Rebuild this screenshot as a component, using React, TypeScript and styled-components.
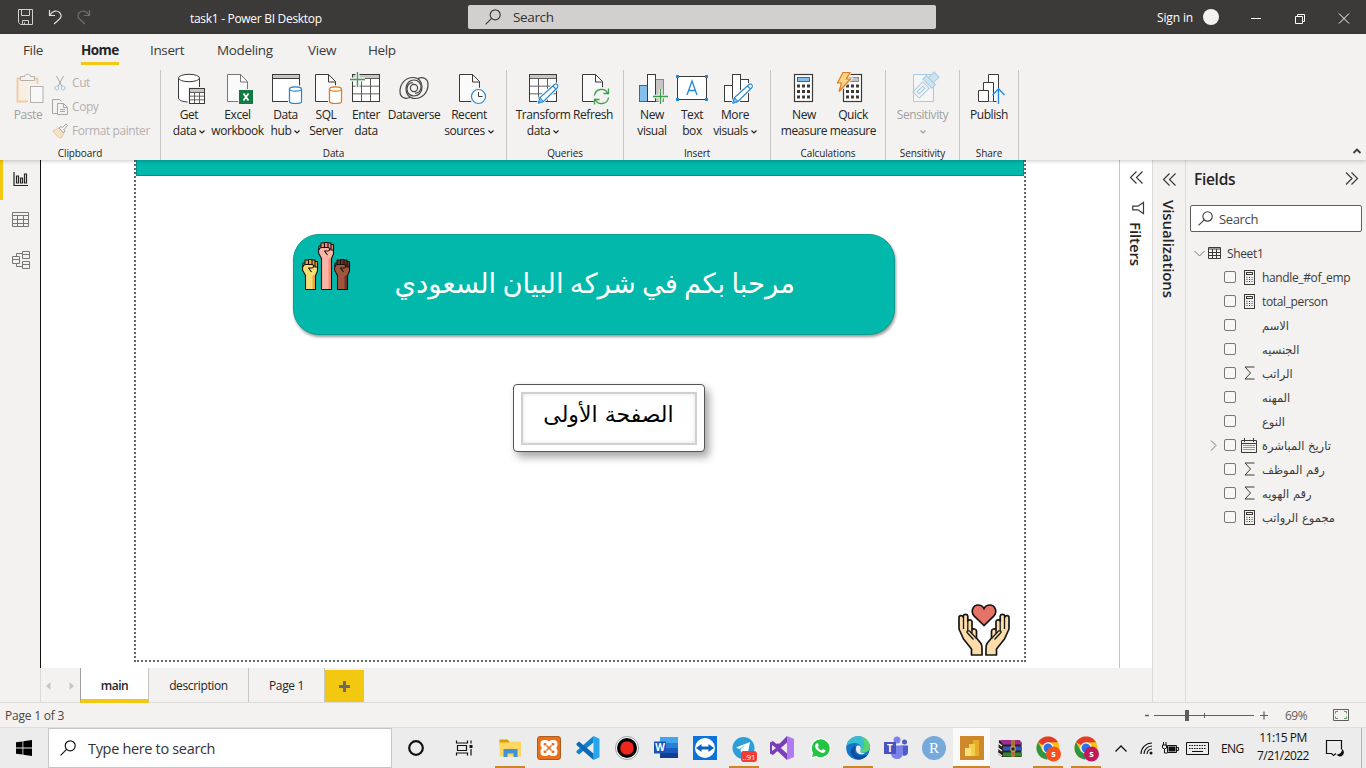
import React from "react";
import styled, { createGlobalStyle, css } from "styled-components";

const GlobalStyle = createGlobalStyle`
  * { box-sizing: border-box; }
  body {
    margin: 0;
    overflow: hidden;
    font-family: "Open Sans", "Noto Sans", "DejaVu Sans", sans-serif;
    font-size: 12px;
    letter-spacing: -0.03em;
    color: #252423;
  }
  svg { display: block; flex: none; }
`;

/* ---------- Shell ---------- */

const Window = styled.div`
  width: 1366px;
  height: 768px;
  display: flex;
  flex-direction: column;
  background: #f3f2f1;
`;

/* ---------- Title bar ---------- */

const TitleBar = styled.header`
  height: 34px;
  flex: none;
  display: flex;
  align-items: center;
  background: #3b3a39;
  color: #fff;
  padding: 0 17px;
`;
const QuickActions = styled.div`
  width: 173px;
  display: flex;
  gap: 13px;
`;
const DocTitle = styled.div`
  width: 278px;
  padding-top: 3px;
  letter-spacing: -0.3px;
`;
const TitleSearch = styled.div`
  width: 468px;
  height: 24px;
  display: flex;
  align-items: center;
  gap: 12px;
  padding-left: 17px;
  border-radius: 2px;
  background: #d2d0ce;
  color: #323130;
  font-size: 13.5px;
`;
const SignIn = styled.div`
  margin-left: auto;
  display: flex;
  align-items: center;
  gap: 10px;
  letter-spacing: -0.15px;
`;
const Avatar = styled.span`
  width: 16px;
  height: 16px;
  border-radius: 50%;
  background: #f3f2f1;
`;
const WindowButtons = styled.div`
  display: flex;
  gap: 34px;
  margin: 2px 0 0 32px;
`;

/* ---------- Ribbon ---------- */

const Ribbon = styled.section`
  height: 126px;
  flex: none;
  position: relative;
  z-index: 1;
  background: #f3f2f1;
  box-shadow: 0 1px 4px rgba(0, 0, 0, 0.22);
`;
const RibbonTabs = styled.nav`
  height: 34px;
  display: flex;
  padding: 0 0 0 23px;
  font-size: 13.5px;
  color: #3b3a39;
`;
const RibbonTab = styled.div<{ $slot: number; $active?: boolean }>`
  width: ${(p) => p.$slot}px;
  span {
    display: inline-block;
    height: 31px;
    line-height: 33px;
    ${(p) =>
      p.$active &&
      css`
        font-weight: 700;
        letter-spacing: -0.6px;
        color: #252423;
        border-bottom: 3px solid #f2c811;
      `}
  }
`;
const RibbonGroups = styled.div`
  height: 92px;
  display: flex;
`;
const Group = styled.div<{ $w: number }>`
  width: ${(p) => p.$w}px;
  height: 90px;
  margin-top: 2px;
  border-right: 1px solid #c8c6c4;
  display: flex;
  flex-direction: column;
`;
const GroupItems = styled.div<{ $pad?: number }>`
  height: 76px;
  display: flex;
  padding-left: ${(p) => p.$pad ?? 0}px;
`;
const GroupName = styled.div`
  font-size: 10px;
  line-height: 14px;
  margin-top: 1px;
  text-align: center;
  letter-spacing: -0.12px;
`;
const BigButton = styled.div<{ $w: number; $dim?: boolean }>`
  width: ${(p) => p.$w}px;
  display: flex;
  flex-direction: column;
  align-items: center;
  padding-top: 2px;
  line-height: 16px;
  white-space: nowrap;
  letter-spacing: -0.42px;
  color: ${(p) => (p.$dim ? "#a19f9d" : "#252423")};
  svg + div { margin-top: 3px; }
`;
const Line = styled.div`
  display: flex;
  align-items: center;
  justify-content: center;
  gap: 3px;
  min-height: 16px;
`;
const ClipboardList = styled.div`
  padding: 2px 0 0 8px;
  color: #b3b0ad;
`;
const ClipboardRow = styled.div`
  height: 24px;
  display: flex;
  align-items: center;
  gap: 4px;
  padding-bottom: 3px;
  letter-spacing: -0.42px;
`;
const Collapse = styled.div`
  margin: 80px 4px 0 auto;
`;

/* ---------- Body ---------- */

const Body = styled.main`
  height: 543px;
  flex: none;
  display: flex;
  border-bottom: 1px solid #dcdad8;
`;
const Rail = styled.aside`
  width: 40px;
  flex: none;
`;
const RailItem = styled.div<{ $active?: boolean }>`
  height: 40px;
  display: flex;
  align-items: center;
  justify-content: center;
  border-left: 3px solid ${(p) => (p.$active ? "#f2c811" : "transparent")};
  padding: 0 3px 1px 0;
`;
const Center = styled.div`
  width: 1112px;
  flex: none;
  display: flex;
  flex-direction: column;
`;
const Stage = styled.div`
  height: 508px;
  display: flex;
  background: #fff;
`;
const Canvas = styled.div`
  width: 1080px;
  border-left: 1px solid #111;
  border-right: 1px solid #c8c6c4;
  padding-left: 93px;
`;
const ReportPage = styled.div`
  width: 892px;
  height: 502px;
  border: 2px dotted #666;
  border-top: 0;
  display: flex;
  flex-direction: column;
  align-items: center;
`;
const TopBand = styled.div`
  width: 888px;
  height: 16px;
  background: #01b8aa;
  border: 1px solid #078f85;
  border-top: 0;
`;
const Banner = styled.div`
  width: 602px;
  height: 101px;
  margin: 58px 0 0 28px;
  border-radius: 26px;
  border: 1px solid #0d9c91;
  background: #01b8aa;
  box-shadow: 1px 2px 3px rgba(0, 0, 0, 0.4);
  display: flex;
  color: #fff;
`;
const Fists = styled.div`
  display: flex;
  align-items: flex-end;
  height: 48px;
  margin: 7px 0 0 8px;
`;
const BannerText = styled.div`
  font-family: "DejaVu Sans", sans-serif;
  font-size: 27.5px;
  line-height: 40px;
  letter-spacing: 0;
  word-spacing: -2.6px;
  width: 400px;
  margin: 28px 0 0 45px;
  text-align: center;
  white-space: nowrap;
`;
const NavCard = styled.div`
  width: 192px;
  height: 68px;
  margin: 49px 0 0 57px;
  padding: 7px;
  border: 1px solid #555;
  border-radius: 4px;
  background: #fff;
  box-shadow: 4px 5px 8px rgba(0, 0, 0, 0.36);
`;
const NavCardInner = styled.div`
  height: 53px;
  border: 2px solid #d0d0d0;
  box-shadow: inset 0 0 4px rgba(0, 0, 0, 0.12);
  font-family: "DejaVu Sans", sans-serif;
  font-size: 22px;
  line-height: 42px;
  letter-spacing: 0;
  text-align: center;
  white-space: nowrap;
  color: #000;
`;
const CornerArt = styled.div`
  align-self: flex-end;
  margin: auto 14px 3px 0;
`;

/* ---------- Side panes ---------- */

const SidePane = styled.div<{ $plain?: boolean }>`
  width: ${(p) => (p.$plain ? 32 : 33)}px;
  flex: none;
  display: flex;
  flex-direction: column;
  align-items: center;
  padding-top: ${(p) => (p.$plain ? 11 : 13)}px;
  background: ${(p) => (p.$plain ? "#fff" : "#f3f2f1")};
  border-left: ${(p) => (p.$plain ? "0" : "1px solid #dcdad8")};
`;
const Vertical = styled.div<{ $top: number }>`
  writing-mode: vertical-rl;
  margin-top: ${(p) => p.$top}px;
  font-size: 15px;
  line-height: 18px;
  font-weight: 600;
  letter-spacing: -0.1px;
`;
const FilterMark = styled.div`
  margin: 18px 0 8px 3px;
`;
const Fields = styled.aside`
  flex: 1;
  border-left: 1px solid #dcdad8;
  display: flex;
  flex-direction: column;
`;
const FieldsHead = styled.div`
  height: 39px;
  display: flex;
  align-items: center;
  justify-content: space-between;
  padding: 0 8px 2px 8px;
  font-size: 15.5px;
  font-weight: 600;
  letter-spacing: -0.3px;
`;
const FieldsSearch = styled.div`
  height: 27px;
  flex: none;
  margin: 6px 4px 9px 4px;
  border: 1px solid #605e5c;
  border-radius: 2px;
  background: #fff;
  display: flex;
  align-items: center;
  gap: 6px;
  padding-left: 7px;
  font-size: 13px;
  color: #484644;
`;
const FieldRow = styled.div`
  height: 24px;
  display: flex;
  align-items: center;
  color: #3b3a39;
  white-space: nowrap;
`;
const Twisty = styled.span<{ $w: number; $pad: number }>`
  width: ${(p) => p.$w}px;
  padding-left: ${(p) => p.$pad}px;
`;
const Check = styled.span`
  width: 12px;
  height: 12px;
  border: 1px solid #7a7876;
  border-radius: 2px;
  background: #f8f7f6;
`;
const FieldIcon = styled.span`
  width: 26px;
  display: flex;
  justify-content: center;
`;
const TableName = styled.span`
  margin-left: 6px;
`;
const FieldName = styled.span<{ $arabic?: boolean }>`
  ${(p) =>
    p.$arabic &&
    css`
      font-family: "DejaVu Sans", sans-serif;
      font-size: 11.5px;
      letter-spacing: 0;
      padding-top: 2px;
    `}
`;

/* ---------- Page tabs and status ---------- */

const PageTabs = styled.div`
  height: 34px;
  display: flex;
  border-left: 1px solid #dcdad8;
`;
const Pager = styled.div`
  width: 39px;
  display: flex;
  align-items: center;
  justify-content: space-between;
  padding: 2px 6px 0 5px;
`;
const PageTab = styled.div<{ $w: number; $active?: boolean }>`
  width: ${(p) => p.$w}px;
  line-height: 35px;
  text-align: center;
  border-right: 1px solid #c8c6c4;
  ${(p) =>
    p.$active &&
    css`
      background: #fff;
      font-weight: 600;
      letter-spacing: -0.5px;
      border-left: 1px solid #a19f9d;
      border-bottom: 4px solid #f2c811;
      height: 35px;
    `}
`;
const AddPage = styled.div`
  width: 39px;
  height: 32px;
  margin-top: 2px;
  background: #f2c811;
  display: flex;
  align-items: center;
  justify-content: center;
`;
const StatusBar = styled.footer`
  height: 24px;
  flex: none;
  display: flex;
  align-items: center;
  padding: 0 17px 0 5px;
  color: #484644;
  letter-spacing: -0.2px;
`;
const ZoomControls = styled.div`
  margin-left: auto;
  display: flex;
  align-items: center;
`;
const ZoomValue = styled.span`
  width: 23px;
  margin: 0 25px 0 17px;
  letter-spacing: -0.5px;
  color: #605e5c;
`;

/* ---------- Taskbar ---------- */

const Taskbar = styled.div`
  height: 41px;
  display: flex;
  background: #ececec;
  border-top: 1px solid #dfdfdf;
`;
const StartButton = styled.div`
  width: 48px;
  display: flex;
  align-items: center;
  justify-content: center;
`;
const TaskSearch = styled.div`
  width: 344px;
  height: 40px;
  border: 1px solid #c6c6c6;
  background: #fff;
  display: flex;
  align-items: center;
  gap: 12px;
  padding-left: 11px;
  font-size: 14.5px;
  letter-spacing: -0.33px;
  color: #333;
`;
const TaskSlot = styled.div<{ $w: number; $active?: boolean; $bar?: boolean }>`
  width: ${(p) => p.$w}px;
  display: flex;
  flex-direction: column;
  align-items: center;
  justify-content: space-between;
  padding-top: 8px;
  background: ${(p) => (p.$active ? "#fafafa" : "transparent")};
  &::after {
    content: "";
    width: ${(p) => (p.$active ? p.$w : 30)}px;
    height: 2px;
    background: ${(p) => (p.$bar ? "#cc8529" : "transparent")};
  }
`;
const Tray = styled.div`
  padding-left: 10px;
  display: flex;
  align-items: center;
  color: #111;
  flex: 1;
`;
const KeyboardMark = styled.span`
  margin-left: 7px;
`;
const Lang = styled.span`
  width: 23px;
  margin: 0 12px;
  letter-spacing: -0.6px;
`;
const Clock = styled.div`
  width: 54px;
  display: flex;
  flex-direction: column;
  align-items: center;
  line-height: 18px;
  letter-spacing: -0.55px;
  white-space: nowrap;
  margin: 0 16px 2px 0;
`;
const ShowDesktop = styled.span`
  height: 40px;
  width: 5px;
  margin-left: auto;
  border-left: 1px solid #b5b5b5;
`;

/* ---------- Shared glyphs ---------- */

const INK = "#3b3a39";
const BLUE = "#2488d8";
const GREEN = "#3a9e4b";

type GlyphProps = { w: number; h: number; c?: string; s?: number; children: React.ReactNode };
const Glyph = ({ w, h, c = INK, s = 1, children }: GlyphProps) => (
  <svg width={w} height={h} viewBox={`0 0 ${w} ${h}`} fill="none" stroke={c} strokeWidth={s} overflow="visible">
    {children}
  </svg>
);

const Caret = ({ c = "#252423" }: { c?: string }) => (
  <Glyph w={6} h={5} c={c} s={1.2}><path d="M.5 1.500 3 4 5.500 1.500" /></Glyph>
);
const Magnifier = ({ size, c = INK }: { size: number; c?: string }) => (
  <svg width={size} height={size} viewBox="0 0 16 16" fill="none" stroke={c} strokeWidth="1.15">
    <circle cx="10.2" cy="5.8" r="5" /><path d="M6.6 9.4.6 15.4" />
  </svg>
);
const DoubleChevron = ({ right }: { right?: boolean }) => (
  <Glyph w={13} h={13} s={1.2}>
    <path d={right ? "M1 .5 7 6.5 1 12.5M6.500 .5 12.500 6.500 6.500 12.5" : "M6.500 .5 .5 6.500 6.500 12.5M12.500 .5 6.500 6.500 12.500 12.5"} />
  </Glyph>
);
const Page = ({ x = 5.5, c = INK }: { x?: number; c?: string }) => (
  <>
    <path d={`M${x} 2.500h13l7 7V29.500H${x}Z`} fill="#fafafa" stroke={c} />
    <path d={`M${x + 13} 2.500v7.500h7`} stroke={c} />
  </>
);
const Cylinder = ({ c }: { c: string }) => (
  <g stroke={c} fill="#fff" strokeWidth="1.200">
    <path d="M19.500 17v12.500c0 1.200 2.700 2 6 2s6-.8 6-2V17" />
    <ellipse cx="25.500" cy="17" rx="6" ry="2.200" />
  </g>
);
const Pencil = ({ dx = 0 }: { dx?: number }) => (
  <g transform={`translate(${dx} 0)`}>
    <path d="M11.500 31 13 25.500 27.500 12.500c2-1.500 4.500 1 3 3L16.500 29.500Z" fill="#fff" stroke="#fff" strokeWidth="3" />
    <path d="M11.500 31 13 25.500 27.500 12.500c2-1.500 4.500 1 3 3L16.500 29.500ZM26 14l3.300 3.300" fill="#fff" stroke={BLUE} strokeWidth="1.200" />
    <path d="M11.500 31 13 25.500l3.500 4Z" fill="#83beec" stroke={BLUE} />
  </g>
);
const Plus = ({ x, y }: { x: number; y: number }) => (
  <path d={`M${x - 7.5} ${y}h15M${x} ${y - 7.5}v15`} stroke={GREEN} strokeWidth="1.3" />
);
const Grid = ({ x, y, w, h }: { x: number; y: number; w: number; h: number }) => (
  <>
    <rect x={x} y={y} width={w} height={h} fill="#fff" />
    <rect x={x + 0.5} y={y + 0.5} width={w - 1} height={3} fill="#c8c6c4" stroke="none" />
    <path
      stroke="#605e5c"
      d={`M${x} ${y + 4}h${w}M${x} ${y + 4 + (h - 4) / 3}h${w}M${x} ${y + 4 + ((h - 4) * 2) / 3}h${w}M${x + w / 3} ${y + 4}v${h - 4}M${x + (w * 2) / 3} ${y + 4}v${h - 4}`}
    />
    <rect x={x} y={y} width={w} height={h} />
  </>
);
const Calculator = ({ x, grey }: { x: number; grey?: boolean }) => (
  <>
    <rect x={x} y="2.500" width="18" height="27" fill="#fff" strokeWidth="1.2" />
    <rect x={x + 3} y="5.500" width="12" height="4" fill={grey ? "#c8c6c4" : "#83beec"} stroke={grey ? "#8a8886" : "#1c6fb8"} />
    {[13, 18.5, 24].map((y) =>
      [2.5, 7.5, 12.5].map((d) => <rect key={`${y}-${d}`} x={x + d} y={y - 0.5} width="3" height="3" fill={INK} stroke="none" />)
    )}
  </>
);

const SWIRL = "M12 25.500C7 27.500 2 25.500 2 19.500 2 11 8 5.500 15 5.500c6 0 9 4.500 9 9.500 0 6-4 9-8 9s-7-3-7-7 2.500-6.300 6-6.300";

const ribbonArt: Record<string, React.ReactNode> = {
  getData: (
    <>
      <path d="M5.500 6v20c0 2.200 4.500 4 10.500 4s10.500-1.800 10.500-4V6" fill="#fff" />
      <ellipse cx="16" cy="6" rx="10.500" ry="3.700" fill="#fff" />
      <rect x="14.500" y="15" width="18" height="18" fill="#f3f2f1" stroke="none" />
      <Grid x={16.5} y={16.5} w={15} h={15} />
    </>
  ),
  excel: (
    <>
      <Page c="#797775" />
      <rect x="16" y="17" width="15" height="15" fill="#f3f2f1" stroke="none" />
      <rect x="17" y="18" width="14" height="14" fill="#107c41" stroke="none" />
      <path d="m21.500 21.500 5 7M26.500 21.500l-5 7" stroke="#fff" strokeWidth="1.800" />
    </>
  ),
  dataHub: (
    <>
      <rect x="2.500" y="2.500" width="27" height="27" fill="#fff" />
      <rect x="3" y="3" width="26" height="3" fill="#c8c6c4" stroke="none" />
      <path d="M2.500 6.500h27" />
      <path d="M18 33V15.500c0-3 15-3 15 0V33Z" fill="#f3f2f1" stroke="none" />
      <Cylinder c={BLUE} />
    </>
  ),
  sql: (
    <>
      <Page />
      <path d="M18 33V15.500c0-3 15-3 15 0V33Z" fill="#f3f2f1" stroke="none" />
      <Cylinder c="#e07b1a" />
    </>
  ),
  enter: (
    <>
      <Grid x={2.5} y={2.5} w={27} h={27} />
      <path d="M0 7.500h15M7.500 0v15" stroke="#f3f2f1" strokeWidth="4" />
      <Plus x={7.5} y={7.5} />
    </>
  ),
  dataverse: (
    <g strokeWidth="1.200" stroke="#484644">
      <path d={SWIRL} />
      <path d={SWIRL} transform="rotate(180 16 16)" />
      <circle cx="16" cy="16" r="3.600" />
    </g>
  ),
  recent: (
    <>
      <Page x={6.5} />
      <circle cx="25.500" cy="24.500" r="9" fill="#f3f2f1" stroke="none" />
      <circle cx="25.500" cy="24.500" r="7" fill="#fff" stroke={BLUE} strokeWidth="1.200" />
      <path d="M25.500 20v4.500h4" />
    </>
  ),
  transform: (<><Grid x={2.5} y={2.5} w={27} h={27} /><Pencil /></>),
  refresh: (
    <>
      <Page />
      <circle cx="24.500" cy="24.500" r="9.500" fill="#f3f2f1" stroke="none" />
      <path d="M17.500 23.500a7 7 0 0 1 13.300-2M31.500 25.500a7 7 0 0 1-13.300 2M31.500 16.500v5h-5M17.500 32.500v-5h5" stroke={GREEN} strokeWidth="1.300" />
    </>
  ),
  newVisual: (
    <>
      <rect x="3.500" y="13.500" width="8" height="16" fill="#83beec" stroke="#1c6fb8" />
      <rect x="19.500" y="7.500" width="8" height="22" fill="#c8c6c4" stroke="#8a8886" />
      <rect x="11.500" y="2.500" width="8" height="27" fill="#fff" />
      <path d="M17 24.500h16M24.500 17v16" stroke="#f3f2f1" strokeWidth="3.500" />
      <Plus x={24.5} y={24.5} />
    </>
  ),
  textBox: (
    <>
      <rect x="1.500" y="4.500" width="29" height="23" fill="#fff" />
      {[[0, 3], [29, 3], [0, 26], [29, 26]].map(([x, y]) => (
        <rect key={`${x}${y}`} x={x} y={y} width="3" height="3" fill={BLUE} stroke="none" />
      ))}
      <path d="m11 23 5-14 5 14M12.500 18.500h7" stroke={BLUE} strokeWidth="1.300" />
    </>
  ),
  more: (
    <>
      <rect x="5.500" y="13.500" width="8" height="16" fill="#fff" />
      <rect x="21.500" y="7.500" width="8" height="22" fill="#fff" />
      <rect x="13.500" y="2.500" width="8" height="27" fill="#fff" />
      <Pencil dx={2.5} />
    </>
  ),
  newMeasure: <Calculator x={6.5} />,
  quickMeasure: (
    <>
      <Calculator x={6.5} grey />
      <path d="M6 .5h7l-3.500 6.500h4L2 19.500 4.500 11H.5Z" fill="#fcd58a" stroke="#f3f2f1" strokeWidth="3" />
      <path d="M6 .5h7l-3.500 6.500h4L2 19.500 4.500 11H.5Z" fill="#fcd58a" stroke="#e07b1a" strokeWidth="1.200" />
    </>
  ),
  sensitivity: (
    <g stroke="#a3cbe3">
      <path d="M6.500 2.500h20v27h-20Z" fill="#f6f6f6" />
      <g transform="rotate(45 20 12)" fill="#f3f2f1">
        <path d="M15.500 13.500h9v14h-9Z" /><path d="M18.500 16.500h3v8h-3Z" />
        <path d="M13.500 6.500h13v5h-13Z" fill="#cfe3ef" /><path d="M16.500-1.500h7v8h-7Z" fill="#cfe3ef" />
      </g>
    </g>
  ),
  publish: (
    <>
      <g fill="#fff" strokeLinejoin="round">
        <path d="M15.500 29.500v-27h10v27Z" /><path d="M10.500 29.500v-19h10v19" /><path d="M5.500 18.500h10v11h-10Z" />
      </g>
      <path d="M20 22.500 25.500 16l6 6V32h-8v-9Z" fill="#f3f2f1" stroke="none" />
      <path d="M25.500 32V17M19.500 23l6-6.200 6 6.200" stroke={BLUE} strokeWidth="1.300" />
    </>
  ),
};

type RibbonButton = { art: string; w: number; lines: string[]; caret?: boolean; dim?: boolean };
type RibbonGroup = { name: string; w: number; pad?: number; items: RibbonButton[] };

const groups: RibbonGroup[] = [
  {
    name: "Data", w: 346, pad: 6,
    items: [
      { art: "getData", w: 44, lines: ["Get", "data"], caret: true },
      { art: "excel", w: 53, lines: ["Excel", "workbook"] },
      { art: "dataHub", w: 43, lines: ["Data", "hub"], caret: true },
      { art: "sql", w: 38, lines: ["SQL", "Server"] },
      { art: "enter", w: 42, lines: ["Enter", "data"] },
      { art: "dataverse", w: 54, lines: ["Dataverse"] },
      { art: "recent", w: 56, lines: ["Recent", "sources"], caret: true },
    ],
  },
  {
    name: "Queries", w: 117, pad: 7,
    items: [
      { art: "transform", w: 58, lines: ["Transform", "data"], caret: true },
      { art: "refresh", w: 42, lines: ["Refresh"] },
    ],
  },
  {
    name: "Insert", w: 147, pad: 6,
    items: [
      { art: "newVisual", w: 44, lines: ["New", "visual"] },
      { art: "textBox", w: 36, lines: ["Text", "box"] },
      { art: "more", w: 50, lines: ["More", "visuals"], caret: true },
    ],
  },
  {
    name: "Calculations", w: 115, pad: 8,
    items: [
      { art: "newMeasure", w: 50, lines: ["New", "measure"] },
      { art: "quickMeasure", w: 48, lines: ["Quick", "measure"] },
    ],
  },
  { name: "Sensitivity", w: 74, items: [{ art: "sensitivity", w: 73, lines: ["Sensitivity", ""], caret: true, dim: true }] },
  { name: "Share", w: 59, items: [{ art: "publish", w: 58, lines: ["Publish"] }] },
];

const RibbonGroupView = ({ g }: { g: RibbonGroup }) => (
  <Group $w={g.w}>
    <GroupItems $pad={g.pad}>
      {g.items.map((b) => (
        <BigButton key={b.art} $w={b.w} $dim={b.dim}>
          <Glyph w={32} h={32}>{ribbonArt[b.art]}</Glyph>
          {b.lines.map((t, i) => (
            <Line key={i}>{t}{b.caret && i === b.lines.length - 1 && <Caret c={b.dim ? "#a19f9d" : undefined} />}</Line>
          ))}
        </BigButton>
      ))}
    </GroupItems>
    <GroupName>{g.name}</GroupName>
  </Group>
);

/* ---------- Report art ---------- */

const Fist = ({ h, skin, shade }: { h: number; skin: string; shade: string }) => (
  <svg width="16" height={h} viewBox={`0 0 16 ${h}`} stroke="#1a1210" strokeWidth="1.100" strokeLinejoin="round" overflow="visible">
    <path d={`M3.500 16.500V${h - 0.5}h10V16.500l2-4.500V6L10 4H1L.5 11Z`} fill={skin} />
    <path d={`M10.500 17v${h - 18}h2.500V16Z`} fill={shade} stroke="none" />
    <path d="M3 1h3.500v6H3ZM6.500.5H10v6.500H6.500ZM10 1h3v6h-3ZM13 2.500h2.500V8H13Z" fill={shade} />
    <path d="M1 8c0-2 1-2.500 3-2.500h6c2 0 2 3.500 0 3.500H6.500l3 4" fill={skin} />
  </svg>
);

const Palm = () => (
  <g strokeLinejoin="round">
    <path d="M13.500 51V45L5.500 35 1 25V13.500c0-2.500 4-2.500 4.300 0V12c.3-2.200 4.200-2.200 4.500 0v5c.5-1.800 4-1.500 4.200.5v8.500c.7-1.800 4.500-1.300 4.500 1v7l4.500 5.500c1 1.500 1 3 1 5V51Z" fill="#fbdcaa" stroke="#171717" strokeWidth="1.700" />
    <path d="M5.500 13.500V25M9.800 17v10.500M14 26v4M15.500 35.500 9.500 29c-1.500-1 0-3 2-2l7 7.500" fill="none" stroke="#171717" strokeWidth="1.300" />
  </g>
);
const HandsHeart = () => (
  <svg width="52" height="53" viewBox="0 0 52 53" overflow="visible">
    <path d="M26 21.500 16 11.800C12 7 15.500 1 20 1c3 0 5 1.500 6 3.500C27 2.500 29 1 32 1c4.500 0 8 6 4 10.800Z" fill="#e57368" stroke="#171717" strokeWidth="1.700" />
    <Palm />
    <g transform="translate(52 0) scale(-1 1)"><Palm /></g>
  </svg>
);

/* ---------- Field list ---------- */

const fieldArt: Record<string, React.ReactNode> = {
  calc: (
    <Glyph w={11} h={15}>
      <rect x=".5" y=".5" width="10" height="14" /><rect x="2.500" y="2.500" width="6" height="2" />
      <path d="M2.500 7.500h6M2.500 9.500h6M2.500 11.500h6" strokeDasharray="1 1.500" />
    </Glyph>
  ),
  sum: <Glyph w={11} h={14}><path d="M10.500 1H1l5.500 6L1 13h9.500" /></Glyph>,
  date: (
    <Glyph w={16} h={15}>
      <path d="M.5 2.500h15v12H.5ZM.5 5.500h15M3.500 0v4M12.500 0v4" />
      <path d="M2.500 7.500h11M2.500 9.500h11M2.500 11.500h11" strokeDasharray="1 1" />
    </Glyph>
  ),
};

const fields: { name: string; icon?: string; expand?: boolean }[] = [
  { name: "handle_#of_emp", icon: "calc" },
  { name: "total_person", icon: "calc" },
  { name: "الاسم" },
  { name: "الجنسيه" },
  { name: "الراتب", icon: "sum" },
  { name: "المهنه" },
  { name: "النوع" },
  { name: "تاريخ المباشرة", icon: "date", expand: true },
  { name: "رقم الموظف", icon: "sum" },
  { name: "رقم الهويه", icon: "sum" },
  { name: "مجموع الرواتب", icon: "calc" },
];

/* ---------- Taskbar icons ---------- */

const Label = ({ x, y, size, fill = "#fff", bold = true, children }: { x: number; y: number; size: number; fill?: string; bold?: boolean; children: string }) => (
  <text x={x} y={y} fontSize={size} fill={fill} stroke="none" textAnchor="middle" fontWeight={bold ? 700 : 400} letterSpacing="0">{children}</text>
);
const Chrome = ({ badge }: { badge: string }) => (
  <>
    <circle cx="12" cy="12" r="11.500" fill="#fbc116" />
    <path d="M12 12 2 6.300A11.500 11.500 0 0 1 22 6.300L12 6.500Z" fill="#e33b2e" />
    <path d="M2 6.300A11.500 11.500 0 0 0 11 23.500l4-7-8-1Z" fill="#279847" />
    <circle cx="12" cy="12" r="5.800" fill="#fff" /><circle cx="12" cy="12" r="4.500" fill="#2a74e8" />
    <circle cx="17.500" cy="18" r="7.500" fill={badge} /><Label x={17.5} y={21} size={9}>s</Label>
  </>
);

const taskIcons: { key: string; w: number; bar?: boolean; active?: boolean; art: React.ReactNode }[] = [
  { key: "explorer", w: 39, bar: true, art: (
    <>
      <path d="M1.500 3.500h8l2 2v3h-10Z" fill="#d9a000" /><path d="M1.500 6.500h9l1-1h11.500v15h-21.500Z" fill="#fdd663" />
      <path d="M5.500 21v-8h14v8h-4v-3.500h-6V21Z" fill="#3f93d6" />
    </>
  ) },
  { key: "xampp", w: 39, art: (
    <>
      <rect x=".5" y=".5" width="23" height="23" rx="2.500" fill="#e9711c" stroke="#b05a1e" />
      <g fill="none" stroke="#fff" strokeWidth="3">
        <rect x="5" y="5.500" width="6" height="5.500" rx="2.500" /><rect x="13" y="5.500" width="6" height="5.500" rx="2.500" />
        <rect x="5" y="13" width="6" height="5.500" rx="2.500" /><rect x="13" y="13" width="6" height="5.500" rx="2.500" />
      </g>
      <path d="M9.500 9.500 14.500 14.500M14.500 9.500 9.500 14.500" stroke="#e9711c" strokeWidth="1.500" />
    </>
  ) },
  { key: "vscode", w: 39, art: (
    <>
      <path d="m17.500 0 6 2.800v18.400l-6 2.800Z" fill="#27a5ee" />
      <path d="M17.500 6.500 3 18.500l-2.500-2v-1.500L17.500 0Z" fill="#1580c9" /><path d="M17.500 17.500 3 5.500.5 7.500V9L17.500 24Z" fill="#0b6ab5" />
    </>
  ) },
  { key: "record", w: 39, art: (
    <><circle cx="12" cy="12" r="11.500" fill="#fff" stroke="#888" strokeWidth=".8" /><circle cx="12" cy="12" r="10" fill="#000" /><circle cx="12" cy="12" r="6.800" fill="#f0251c" /></>
  ) },
  { key: "word", w: 39, art: (
    <>
      <path d="M6 1h18v6H6Z" fill="#41a5ee" /><path d="M6 7h18v5H6Z" fill="#2b7cd3" /><path d="M6 12h18v5H6Z" fill="#185abd" /><path d="M6 17h18v5H6Z" fill="#103f91" />
      <rect y="5.500" width="12" height="12" fill="#1e52b2" /><Label x={6} y={15} size={10}>W</Label>
    </>
  ) },
  { key: "teamviewer", w: 39, art: (
    <>
      <rect width="24" height="24" fill="#0b74da" /><circle cx="12" cy="12" r="10" fill="#fff" />
      <path d="m3 12 5.500-4v2.500h7V8l5.500 4-5.500 4v-2.500h-7V16Z" fill="#0b62b8" />
    </>
  ) },
  { key: "telegram", w: 39, bar: true, art: (
    <>
      <circle cx="11.500" cy="12" r="11" fill="#2b9fd9" /><path d="M4 11.500 18 6l-2.300 12-4.500-3.300-2.200 2.200-.5-4L14 9l-7 4Z" fill="#fff" />
      <rect x="9" y="15" width="16" height="11" rx="3" fill="#f23c34" /><Label x={17} y={23.5} size={8} bold={false}>..91</Label>
    </>
  ) },
  { key: "visualstudio", w: 38, art: (
    <>
      <path d="m17 0 7 3v18l-7 3Z" fill="#b179f1" /><path d="M17 6.500 3 19l-3-1.500v-11L3 5l14 12.500V24L.5 8.500M17 0v6.500L3 19 1 16.500Z" fill="#7a3fb8" />
      <path d="m2 9 4 3-4 3Z" fill="#ececec" />
    </>
  ) },
  { key: "whatsapp", w: 38, art: (
    <>
      <path d="M3 22 4.500 17A9.500 9.500 0 1 1 8 20.500Z" fill="#25c544" stroke="#fff" strokeWidth="1.200" />
      <path d="M8.500 7.500c1.500-1 2 1 2.200 2.200L9.800 11c1 2 2 2.800 4 3.500l1.200-1.500 2.500 1.300c0 3-3 3-5 2-3.500-1.500-6-5-5.500-7Z" fill="#fff" />
    </>
  ) },
  { key: "edge", w: 38, bar: true, art: (
    <>
      <circle cx="12" cy="12" r="11.800" fill="#1674c9" />
      <path d="M.3 10.500C1.500 4 6.500.2 12 .2c7 0 11.800 5 11.800 10.300 0 4-3 6-6.300 6-3 0-4-1-3-2.500 2-3-1-7-5.500-7-4 0-7.500 1.500-8.700 3.500Z" fill="#35bfd0" />
      <path d="M15 .8c5.500 1.200 8.800 5.500 8.800 9.700 0 4-3 6-6.300 6-3 0-4-1-3-2.500 4 1 6-8 .5-13.200Z" fill="#58d56c" />
      <path d="M10 10c-4 6 1 12 11.500 9-5 6.500-14 5.500-16.500-1-1-4 1.500-7.500 5-8Z" fill="#0c4f9e" />
      <path d="M10.500 10c2.500-1.500 5.500 1 4 4-1 2 1 3.500 4.500 3-3 2.500-9 1-9-3.500 0-1.500.2-2.500.5-3.500Z" fill="#ececec" />
    </>
  ) },
  { key: "teams", w: 38, art: (
    <>
      <circle cx="20.500" cy="6" r="2.500" fill="#5059c9" /><circle cx="13" cy="4" r="3.500" fill="#7b83eb" />
      <path d="M17 9.500h7v6c0 4-3 5-5 4Z" fill="#5059c9" /><path d="M7 9.500h12V17c0 8-12 8-12 0Z" fill="#7b83eb" />
      <rect y="6" width="12" height="12" fill="#4a52bd" /><Label x={6} y={15.5} size={10}>T</Label>
    </>
  ) },
  { key: "r", w: 38, art: (
    <><circle cx="12" cy="12" r="12" fill="#75aadb" /><text x="12" y="17" fontSize="15" fill="#fff" textAnchor="middle" fontFamily="Liberation Serif, serif" letterSpacing="0">R</text></>
  ) },
  { key: "powerbi", w: 37, bar: true, active: true, art: (
    <><rect width="24" height="24" fill="#cf892a" /><path d="M13 4h6v16h-6Z" fill="#e8ac2c" /><path d="M9 8h6v12H9Z" fill="#f5cf4a" /><path d="M5 12h6v8H5Z" fill="#fbe27a" /></>
  ) },
  { key: "winrar", w: 39, art: (
    <>
      <path d="m1 4 4 2h18.500v15H4L0 18Z" fill="#2a2320" />
      <path d="M2 4h20l2 4.500H5Z" fill="#a12a8d" /><path d="M5 10.500h19v4H5Z" fill="#3158c8" /><path d="M5 16.500h19v4H5Z" fill="#2c8c2a" />
      <path d="m0 7 4 3M0 12l4 3M0 17l4 3" stroke="#f0e8e0" strokeWidth="1.500" />
      <path d="M13 4h4v17h-4Z" fill="#a8743c" /><rect x="13" y="11" width="4" height="4" fill="#222" stroke="#e3c65a" strokeWidth=".8" />
    </>
  ) },
  { key: "chrome1", w: 38, bar: true, art: <Chrome badge="#f4511e" /> },
  { key: "chrome2", w: 38, bar: true, art: <Chrome badge="#c2185b" /> },
];

export default function App() {
  return (
    <Window>
      <GlobalStyle />
      <TitleBar>
        <QuickActions>
          <Glyph w={17} h={16} c="#d2d0ce"><path d="M1.500.5h14v15h-12l-2-2ZM4.500.5v6h8v-6M5.500 15.500v-4h6v4M7.500 15.500v-2" /></Glyph>
          <Glyph w={16} h={16} c="#e1dfdd" s={1.2}><path d="M2.500 1v5.500H8M2.500 6.500C6 1.500 10 1 12.500 3.500s2 5-.5 7L7 15" /></Glyph>
          <Glyph w={16} h={16} c="#72706e" s={1.2}><path d="M13.500 1v5.500H8M13.500 6.500C10 1.500 6 1 3.500 3.500s-2 5 .5 7L9 15" /></Glyph>
        </QuickActions>
        <DocTitle>task1 - Power BI Desktop</DocTitle>
        <TitleSearch><Magnifier size={16} />Search</TitleSearch>
        <SignIn>Sign in<Avatar /></SignIn>
        <WindowButtons>
          <Glyph w={10} h={11} c="#fff"><path d="M0 5.500h10" /></Glyph>
          <Glyph w={10} h={11} c="#fff"><path d="M.5 3.500h7v7h-7ZM2.500 3.500v-2h7v7h-2" /></Glyph>
          <Glyph w={10} h={11} c="#fff"><path d="M0 .5l10 10M10 .5 0 10.500" /></Glyph>
        </WindowButtons>
      </TitleBar>

      <Ribbon>
        <RibbonTabs>
          <RibbonTab $slot={58}><span>File</span></RibbonTab>
          <RibbonTab $slot={69} $active><span>Home</span></RibbonTab>
          <RibbonTab $slot={67}><span>Insert</span></RibbonTab>
          <RibbonTab $slot={91}><span>Modeling</span></RibbonTab>
          <RibbonTab $slot={60}><span>View</span></RibbonTab>
          <RibbonTab $slot={60}><span>Help</span></RibbonTab>
        </RibbonTabs>
        <RibbonGroups>
          <Group $w={161}>
            <GroupItems $pad={12}>
              <BigButton $w={32} $dim>
                <Glyph w={32} h={32} c="#b3b0ad">
                  <path d="M5.500 6.500h20v23h-20Z" stroke="#f0cb9c" fill="#f8eee2" strokeWidth="1.800" />
                  <path d="M8.500 4.500h4c0-3 6-3 6 0h4v4h-14Z" fill="#f3f2f1" />
                  <rect x="17.500" y="13.500" width="14" height="17" fill="#f8f8f8" stroke="#f3f2f1" strokeWidth="3" />
                  <rect x="18.500" y="14.500" width="12.500" height="16" fill="#f8f8f8" />
                </Glyph>
                <Line>Paste</Line>
              </BigButton>
              <ClipboardList>
                <ClipboardRow>
                  <Glyph w={16} h={16} c="#a9a7a5">
                    <path d="M4.500 1 10 11.500M11.500 1 6 11.500" /><circle cx="4.800" cy="13" r="2" stroke="#9fc8e2" /><circle cx="11.200" cy="13" r="2" stroke="#9fc8e2" />
                  </Glyph>
                  Cut
                </ClipboardRow>
                <ClipboardRow>
                  <Glyph w={16} h={16} c="#a9a7a5">
                    <path d="M5 14.500H.5V.500h7l2 2M5.500 4.500h6l4 4v7h-10ZM11.500 4.500v4h4M8 10.500h5M8 12.500h5" />
                  </Glyph>
                  Copy
                </ClipboardRow>
                <ClipboardRow>
                  <Glyph w={16} h={16} c="#a9a7a5">
                    <path d="m1 8 6-3 5 5.500-3 4.500c-3-1-6-3.500-8-7Z" fill="#f6e2c8" stroke="#e9c49a" /><path d="m7 5 2-1.500 1.500 1L14 1l1.500 1.500L12 6.500l1 1.500-1.500 2Z" fill="#f3f2f1" />
                  </Glyph>
                  Format painter
                </ClipboardRow>
              </ClipboardList>
            </GroupItems>
            <GroupName>Clipboard</GroupName>
          </Group>
          {groups.map((g) => <RibbonGroupView key={g.name} g={g} />)}
          <Collapse><Glyph w={10} h={6} s={1.8}><path d="m1.500 5 3.500-3.500L8.500 5" /></Glyph></Collapse>
        </RibbonGroups>
      </Ribbon>

      <Body>
        <Rail>
          <RailItem $active>
            <Glyph w={15} h={15} c="#252423" s={1.2}><path d="M1 0v13.500h14M3.500 4h2v7h-2ZM7.500 6h2v5h-2ZM11.500 2h2v9h-2Z" /></Glyph>
          </RailItem>
          <RailItem>
            <Glyph w={17} h={15} c="#797775"><path d="M.5.5h16v14H.5ZM.5 3.500h16M.5 7.500h16M.5 11.500h16M5.500 3.500v11M11.500 3.500v11" /></Glyph>
          </RailItem>
          <RailItem>
            <Glyph w={19} h={18} c="#797775"><path d="M1.500 5.500h7v7h-7ZM1.500 8.500h7M11.500.5h7v7h-7ZM11.500 3.500h7M11.500 10.500h7v7h-7ZM11.500 13.500h7M5.500 5.500v-3h6M5.500 12.500v3h6" /></Glyph>
          </RailItem>
        </Rail>

        <Center>
          <Stage>
            <Canvas>
              <ReportPage>
                <TopBand />
                <Banner>
                  <Fists>
                    <Fist h={31} skin="#f9dd74" shade="#eda23c" />
                    <Fist h={48} skin="#fcb4a4" shade="#f48a76" />
                    <Fist h={31} skin="#a0553f" shade="#6e3426" />
                  </Fists>
                  <BannerText dir="rtl">مرحبا بكم في شركه البيان السعودي</BannerText>
                </Banner>
                <NavCard><NavCardInner dir="rtl">الصفحة الأولى</NavCardInner></NavCard>
                <CornerArt><HandsHeart /></CornerArt>
              </ReportPage>
            </Canvas>
            <SidePane $plain>
              <DoubleChevron />
              <FilterMark>
                <Glyph w={12} h={12} s={1.2}><path d="M11.500.5v11L6 7.800H.8V4.200H6Z" /></Glyph>
              </FilterMark>
              <Vertical $top={0}>Filters</Vertical>
            </SidePane>
          </Stage>
          <PageTabs>
            <Pager>
              <Glyph w={5} h={8}><path d="M4.500 0v8L0 4Z" fill="#c8c6c4" stroke="none" /></Glyph>
              <Glyph w={5} h={8}><path d="M.5 0v8L5 4Z" fill="#c8c6c4" stroke="none" /></Glyph>
            </Pager>
            <PageTab $w={69} $active>main</PageTab>
            <PageTab $w={100}>description</PageTab>
            <PageTab $w={76}>Page 1</PageTab>
            <AddPage><Glyph w={11} h={11} c="#6b6a68" s={3}><path d="M5.500 0v11M0 5.500h11" /></Glyph></AddPage>
          </PageTabs>
        </Center>

        <SidePane>
          <DoubleChevron />
          <Vertical $top={14}>Visualizations</Vertical>
        </SidePane>

        <Fields>
          <FieldsHead>Fields<DoubleChevron right /></FieldsHead>
          <FieldsSearch><Magnifier size={15} />Search</FieldsSearch>
          <FieldRow>
            <Twisty $w={22} $pad={8}><Glyph w={11} h={7} c="#797775"><path d="m.5 1 5 5 5-5" /></Glyph></Twisty>
            <Glyph w={13} h={12}><path d="M.5.5h12v11H.5ZM.5 2h12M.5 5.500h12M.5 8.500h12M4.500 2v9.500M8.500 2v9.500" /></Glyph>
            <TableName>Sheet1</TableName>
          </FieldRow>
          {fields.map((f) => (
            <FieldRow key={f.name}>
              <Twisty $w={38} $pad={24}>
                {f.expand && <Glyph w={7} h={11} c="#797775"><path d="m1 .5 5 5-5 5" /></Glyph>}
              </Twisty>
              <Check />
              <FieldIcon>{f.icon && fieldArt[f.icon]}</FieldIcon>
              <FieldName $arabic={f.name.charCodeAt(0) > 1000}>{f.name}</FieldName>
            </FieldRow>
          ))}
        </Fields>
      </Body>

      <StatusBar>
        Page 1 of 3
        <ZoomControls>
          <Glyph w={110} h={12} c="#605e5c">
            <path d="M1 6.500h4" strokeWidth="1.500" /><path d="M10 6.500h100M60.500 4v5" /><path d="M43 1v11" strokeWidth="4" />
          </Glyph>
          <Glyph w={14} h={12} c="#605e5c" s={1.2}><path d="M6 6.500h8M10 2.500v8" /></Glyph>
          <ZoomValue>69%</ZoomValue>
          <Glyph w={16} h={12} c="#605e5c"><path d="M.5.500h15v11H.5Z" /><path d="M5 2.500H2.500v2M11 2.500h2.500v2M5 9.500H2.500v-2M11 9.500h2.500v-2" stroke="#5a9a5a" /></Glyph>
        </ZoomControls>
      </StatusBar>

      <Taskbar>
        <StartButton>
          <svg width="16" height="16" viewBox="0 0 16 16"><path d="M0 2.300 6.500 1.400V7.600H0ZM7.300 1.300 16 0v7.600H7.300ZM0 8.400h6.500v6.200L0 13.700ZM7.300 8.400H16V16l-8.700-1.200Z" /></svg>
        </StartButton>
        <TaskSearch><Magnifier size={16} c="#111" />Type here to search</TaskSearch>
        <TaskSlot $w={48}><Glyph w={24} h={24} c="#111" s={2.2}><circle cx="12" cy="12" r="6.800" /></Glyph></TaskSlot>
        <TaskSlot $w={50}>
          <Glyph w={24} h={24} c="#111" s={1.2}><path d="M3.500 4.500v2.500h11V4.500M3.500 19.500v-2.500h11v2.500M4.500 9.500h9v5h-9ZM18 4.500v3M18 13v6.500" /><rect x="16.500" y="9" width="3" height="3" fill="#111" stroke="none" /></Glyph>
        </TaskSlot>
        {taskIcons.map((t) => (
          <TaskSlot key={t.key} $w={t.w} $bar={t.bar} $active={t.active}>
            <svg width="24" height="24" viewBox="0 0 24 24" overflow="visible">{t.art}</svg>
          </TaskSlot>
        ))}
        <Tray>
          <Glyph w={12} h={7} c="#111" s={1.3}><path d="m.5 6.500 5.500-5.500 5.500 5.500" /></Glyph>
          <svg width="34" height="14" viewBox="0 0 34 14" fill="none" stroke="#111" strokeWidth="1.100">
            <path d="M14 13A11 11 0 0 1 25 2M17 13a8 8 0 0 1 8-8M20 13a5 5 0 0 1 5-5" /><circle cx="24" cy="12" r="1.500" fill="#111" stroke="none" />
          </svg>
          <Glyph w={18} h={12} c="#111"><path d="M6.500 3.500h9v7h-9ZM16 5.500h1.500v3H16M2.500 0v3M5 0v3M1.500 3h4v3l-2 1-2-1ZM3.500 7v4h3" /><rect x="8" y="5" width="6" height="4" fill="#111" /></Glyph>
          <KeyboardMark>
            <Glyph w={23} h={13} c="#111"><path d="M.5.500h22v12H.5Z" /><path d="M3 3.500h17M3 6.500h17" strokeDasharray="1.500 1" /><path d="M6 9.500h11" /></Glyph>
          </KeyboardMark>
          <Lang>ENG</Lang>
          <Clock><span>11:15 PM</span><span>7/21/2022</span></Clock>
          <Glyph w={17} h={16} c="#111" s={1.2}><path d="M10 13.500 7.500 15.500 5.500 13.500H.5V.500h15v9" /><path d="M16 9a4 4 0 1 1-5.500 5.500A5 5 0 0 0 16 9Z" fill="#111" stroke="none" /></Glyph>
          <ShowDesktop />
        </Tray>
      </Taskbar>
    </Window>
  );
}
